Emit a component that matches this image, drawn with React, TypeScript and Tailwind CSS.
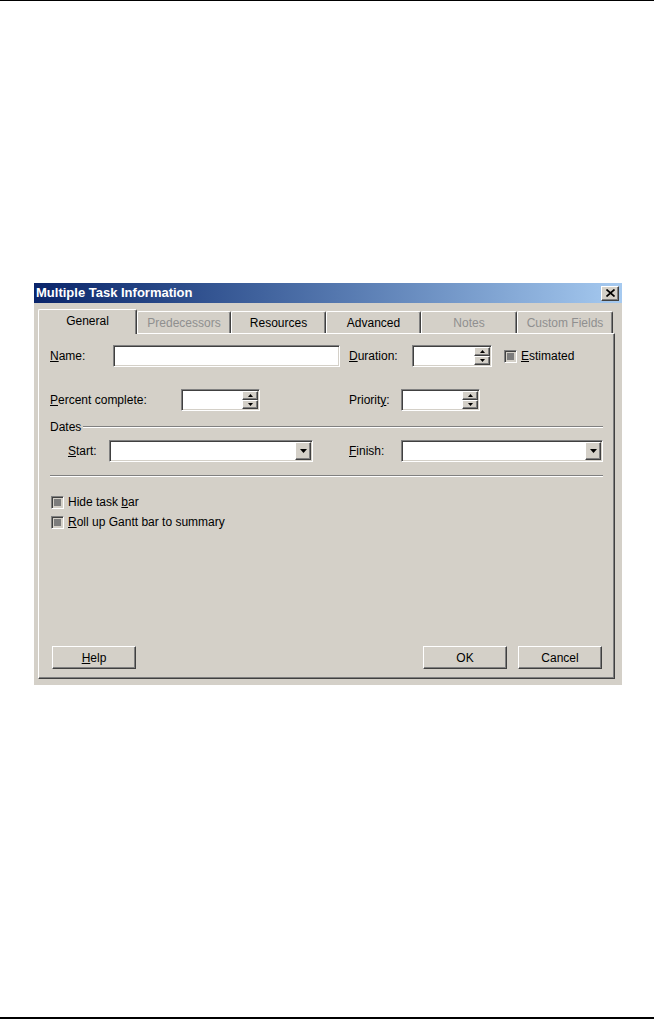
import React from 'react';

const sunken =
  'border border-t-[#808080] border-l-[#808080] border-b-white border-r-white shadow-[inset_1px_1px_0_#404040,inset_-1px_-1px_0_#d4d0c8]';
const raised =
  'border border-t-white border-l-white border-b-[#404040] border-r-[#404040] shadow-[inset_-1px_-1px_0_#808080] bg-[#d4d0c8]';

function Arrow({ up }: { up?: boolean }) {
  return (
    <svg width="5" height="3" viewBox="0 0 5 3">
      <path d={up ? 'M2.5 0 L5 3 L0 3 Z' : 'M0 0 L5 0 L2.5 3 Z'} fill="#000" />
    </svg>
  );
}

function SpinBox({ className }: { className: string }) {
  return (
    <div className={`${sunken} ${className} h-[22px] bg-white flex p-px`}>
      <div className="flex-1" />
      <div className="w-[16px] flex flex-col">
        <div className={`${raised} flex-1 flex items-center justify-center`}>
          <Arrow up />
        </div>
        <div className={`${raised} flex-1 flex items-center justify-center`}>
          <Arrow />
        </div>
      </div>
    </div>
  );
}

function Combo({ className }: { className: string }) {
  return (
    <div className={`${sunken} ${className} h-[22px] bg-white flex p-px`}>
      <div className="flex-1" />
      <div className={`${raised} w-[16px] flex items-center justify-center`}>
        <svg width="7" height="4" viewBox="0 0 7 4">
          <path d="M0 0 L7 0 L3.5 4 Z" fill="#000" />
        </svg>
      </div>
    </div>
  );
}

function Check({ className = '' }: { className?: string }) {
  return (
    <div className={`${sunken} ${className} w-[13px] h-[13px] bg-[#d4d0c8] p-[2px]`}>
      <div className="w-full h-full bg-[#7c7c7c]" />
    </div>
  );
}

function Tab({ label, width, selected, disabled }: { label: string; width: string; selected?: boolean; disabled?: boolean }) {
  if (selected) {
    return (
      <div
        className={`${width} h-[25px] -mb-px relative z-10 bg-[#d4d0c8] border-l border-t border-r border-l-white border-t-white border-r-[#404040] shadow-[inset_-1px_0_0_#808080] rounded-t-[2px] flex items-center justify-center pb-[2px]`}
      >
        {label}
      </div>
    );
  }
  return (
    <div
      className={`${width} h-[22px] border-l border-t border-r border-l-white border-t-white border-r-[#404040] shadow-[inset_-1px_0_0_#808080] rounded-t-[2px] flex items-center justify-center ${disabled ? 'text-[#8f8f8f]' : ''}`}
    >
      {label}
    </div>
  );
}

function U({ children }: { children: React.ReactNode }) {
  return <span className="underline underline-offset-[1px]">{children}</span>;
}

export default function App() {
  return (
    <div className="w-[654px] h-[1020px] bg-white flex flex-col font-['Liberation_Sans',Arial,sans-serif] text-[12px] text-black">
      <div className="h-px bg-black" />

      <div className="mt-[282px] ml-[34px] w-[588px] h-[402px] bg-[#d4d0c8] flex flex-col">
        {/* title bar */}
        <div className="h-[20px] bg-linear-to-r from-[#0a246a] to-[#a6caf0] flex items-center">
          <span className="pl-[2px] text-[13px] font-bold text-white">Multiple Task Information</span>
          <div className={`${raised} ml-auto mr-[3px] w-[18px] h-[15px] flex items-center justify-center`}>
            <svg width="9" height="8" viewBox="0 0 9 8">
              <path d="M0.5 0.5 L8.5 7.5 M8.5 0.5 L0.5 7.5" stroke="#000" strokeWidth="1.7" />
            </svg>
          </div>
        </div>

        <div className="pl-[4px] pt-[6px] flex flex-col">
          {/* tabs */}
          <div className="h-[24px] flex items-end">
            <Tab label="General" width="w-[99px]" selected />
            <Tab label="Predecessors" width="w-[94px]" disabled />
            <Tab label="Resources" width="w-[95px]" />
            <Tab label="Advanced" width="w-[95px]" />
            <Tab label="Notes" width="w-[96px]" disabled />
            <Tab label="Custom Fields" width="w-[96px]" disabled />
          </div>

          {/* panel */}
          <div className="w-[577px] h-[346px] border border-t-white border-l-white border-r-[#404040] border-b-[#404040] shadow-[inset_-1px_-1px_0_#808080] pl-[11px] pr-[11px] pt-[11px] flex flex-col">
            <div className="h-[22px] flex items-center">
              <span className="w-[63px]">
                <U>N</U>ame:
              </span>
              <div className={`${sunken} w-[227px] h-full bg-white`} />
              <span className="ml-[9px] w-[63px]">
                <U>D</U>uration:
              </span>
              <SpinBox className="w-[80px]" />
              <Check className="ml-[12px]" />
              <span className="ml-[4px]">
                <U>E</U>stimated
              </span>
            </div>

            <div className="mt-[22px] h-[22px] flex items-center">
              <span className="w-[131px]">
                <U>P</U>ercent complete:
              </span>
              <SpinBox className="w-[79px]" />
              <span className="ml-[89px] w-[52px]">
                Priorit<U>y</U>:
              </span>
              <SpinBox className="w-[79px]" />
            </div>

            <div className="mt-[9px] h-[14px] flex items-center">
              <span>Dates</span>
              <div className="ml-[2px] flex-1 h-[2px] border-t border-b border-t-[#808080] border-b-white" />
            </div>

            <div className="mt-[6px] h-[22px] flex items-center">
              <span className="ml-[18px] w-[41px]">
                <U>S</U>tart:
              </span>
              <Combo className="w-[204px]" />
              <span className="ml-[36px] w-[52px]">
                <U>F</U>inish:
              </span>
              <Combo className="w-[202px] -mr-px" />
            </div>

            <div className="mt-[13px] h-[2px] border-t border-b border-t-[#808080] border-b-white" />

            <div className="mt-[15px] h-[20px] flex items-center">
              <Check className="ml-px" />
              <span className="ml-[4px]">
                Hide task <U>b</U>ar
              </span>
            </div>
            <div className="h-[20px] flex items-center">
              <Check className="ml-px" />
              <span className="ml-[4px]">
                <U>R</U>oll up Gantt bar to summary
              </span>
            </div>

            <div className="flex-1" />

            <div className="mb-[9px] h-[23px] flex">
              <button className={`${raised} ml-[2px] w-[84px] h-full`}>
                <U>H</U>elp
              </button>
              <button className={`${raised} ml-auto w-[84px] h-full`}>OK</button>
              <button className={`${raised} ml-[11px] mr-px w-[84px] h-full`}>Cancel</button>
            </div>
          </div>
        </div>
      </div>

      <div className="flex-1" />
      <div className="h-[2px] bg-black mb-px" />
    </div>
  );
}
